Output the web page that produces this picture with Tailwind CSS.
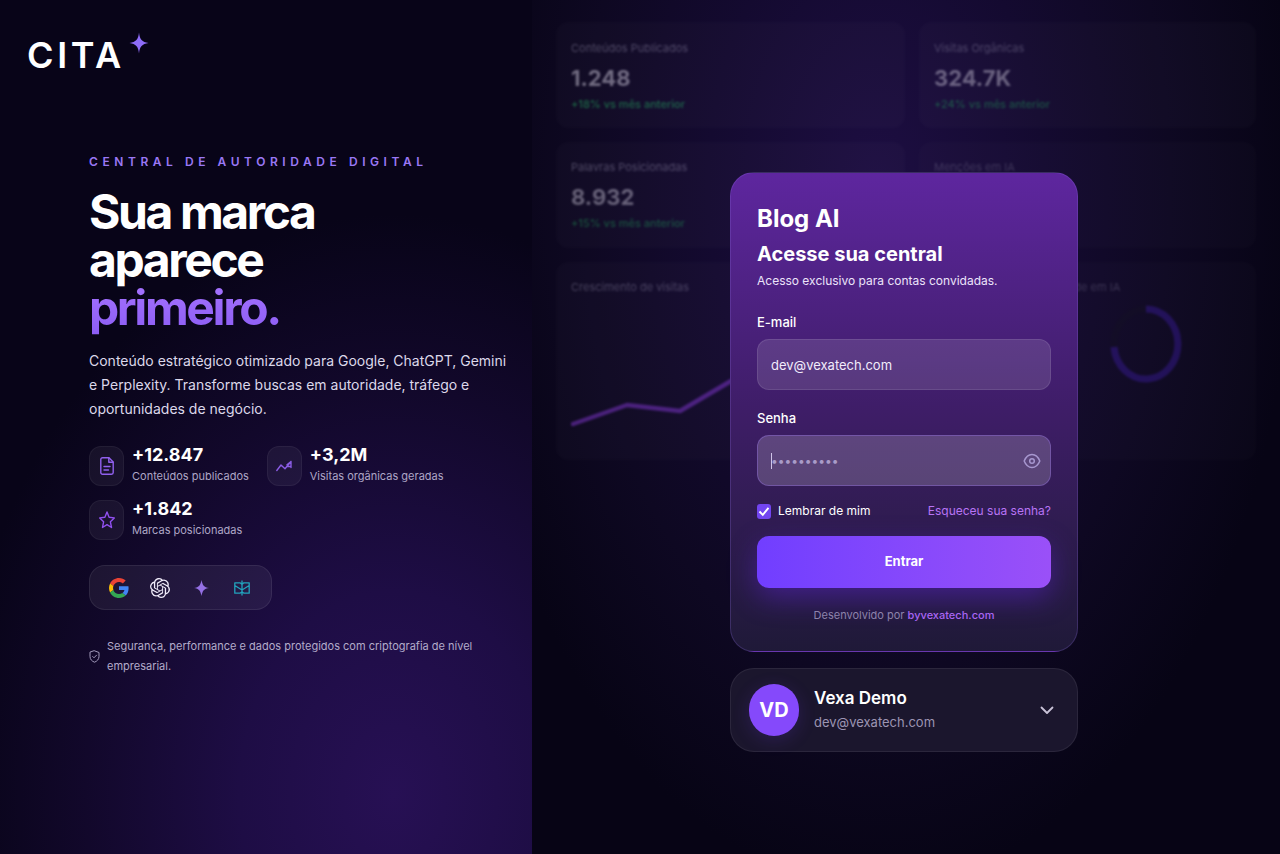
<!DOCTYPE html>
<html lang="pt-BR">
<head>
    <meta charset="UTF-8">
    <meta name="viewport" content="width=device-width, initial-scale=1.0">
    <title>CITA - Blog AI</title>
    <script src="https://cdn.jsdelivr.net/npm/@tailwindcss/browser@4"></script>
</head>
<body class="bg-[#060412] font-['Inter',sans-serif] text-white">
    <div class="grid min-h-screen grid-cols-[133fr_187fr]">

        <!-- Apresentação -->
        <section class="flex flex-col bg-[radial-gradient(ellipse_440px_580px_at_74%_93%,#271054_0%,#1e0d45_35%,#12082b_70%,#080418_100%)]">
            <header class="flex items-start pl-[27px] pt-[32px]">
                <span class="pt-[3px] text-4xl leading-10 font-semibold tracking-widest">CITA</span>
                <svg class="ml-1 h-[22px] w-[20px]" viewBox="0 0 20 22" fill="#8e6cf8" aria-hidden="true"><path d="M10 0.500C10.800 7.500 13 10 19.500 11C13 12 10.800 14.500 10 21.500C9.200 14.500 7 12 0.500 11C7 10 9.200 7.500 10 0.500Z"/></svg>
            </header>

            <div class="pl-[89px] pr-4 pt-[78px]">
                <p class="text-xs leading-[18px] font-semibold tracking-[0.38em] text-[#9a78f5]">CENTRAL DE AUTORIDADE DIGITAL</p>
                <h1 class="mt-[17px] text-5xl leading-[48px] font-bold tracking-tighter">
                    Sua marca<br>aparece<br>
                    <span class="bg-linear-to-b from-[#a874ff] to-[#8758f2] bg-clip-text pb-2 text-transparent">primeiro.</span>
                </h1>
                <p class="mt-[17px] max-w-[426px] text-sm leading-6 text-[#dcd8ea]">Conteúdo estratégico otimizado para Google, ChatGPT, Gemini e Perplexity. Transforme buscas em autoridade, tráfego e oportunidades de negócio.</p>

                <ul class="mt-6 flex flex-wrap gap-x-[18px] gap-y-3">
                    <li class="flex items-center gap-2">
                        <span class="flex h-10 w-[35px] items-center justify-center rounded-xl border border-white/5 bg-white/5">
                            <svg class="h-5 w-4" viewBox="0 0 16 20" fill="none" stroke="#9160ee" stroke-width="1.400" stroke-linecap="round" stroke-linejoin="round" aria-hidden="true"><path d="M10 1.800H3.500A1.700 1.700 0 0 0 1.800 3.500V16.500A1.700 1.700 0 0 0 3.500 18.200H12.500A1.700 1.700 0 0 0 14.200 16.500V6Z"/><path d="M9.800 2V6.300H14M5 10.500H11M5 14H9.500"/></svg>
                        </span>
                        <div>
                            <strong class="block text-lg leading-5 font-bold">+12.847</strong>
                            <span class="block text-[11px] leading-[22px] text-[#aea6c6]">Conteúdos publicados</span>
                        </div>
                    </li>
                    <li class="flex items-center gap-2">
                        <span class="flex h-10 w-[35px] items-center justify-center rounded-xl border border-white/5 bg-white/5">
                            <svg class="h-5 w-4" viewBox="0 0 16 20" fill="none" stroke="#8a5ce4" stroke-width="1.400" stroke-linecap="round" stroke-linejoin="round" aria-hidden="true"><path d="M0.800 14.500L5 9L9 12.800L15 5.500V11.500M11 8.800L15 5.500M11.500 10.500H15"/></svg>
                        </span>
                        <div>
                            <strong class="block text-lg leading-5 font-bold">+3,2M</strong>
                            <span class="block text-[11px] leading-[22px] text-[#aea6c6]">Visitas orgânicas geradas</span>
                        </div>
                    </li>
                    <li class="flex items-center gap-2">
                        <span class="flex h-10 w-[35px] items-center justify-center rounded-xl border border-white/5 bg-white/5">
                            <svg class="h-5 w-4" viewBox="0 0 16 20" fill="none" stroke="#9150f0" stroke-width="1.400" stroke-linejoin="round" aria-hidden="true"><path d="M8 2L10.100 7.300L15.300 7.900L11.400 11.800L12.500 17.500L8 14.700L3.500 17.500L4.600 11.800L0.700 7.900L5.900 7.300Z"/></svg>
                        </span>
                        <div>
                            <strong class="block text-lg leading-5 font-bold">+1.842</strong>
                            <span class="block text-[11px] leading-[22px] text-[#aea6c6]">Marcas posicionadas</span>
                        </div>
                    </li>
                </ul>

                <div class="mt-6 flex h-[45px] w-fit items-center gap-[21px] rounded-2xl border border-white/8 bg-white/6 px-[19px]">
                    <svg class="h-5 w-5" viewBox="0 0 48 48" role="img" aria-label="Google">
                        <path fill="#EA4335" d="M24 9.500c3.540 0 6.710 1.220 9.210 3.600l6.850-6.850C35.900 2.380 30.470 0 24 0 14.620 0 6.510 5.380 2.560 13.220l7.980 6.190C12.430 13.720 17.740 9.500 24 9.500z"/>
                        <path fill="#4285F4" d="M46.980 24.550c0-1.570-.15-3.090-.38-4.550H24v9.020h12.940c-.58 2.960-2.260 5.480-4.780 7.180l7.730 6c4.510-4.180 7.090-10.360 7.090-17.650z"/>
                        <path fill="#FBBC05" d="M10.530 28.590c-.48-1.450-.76-2.990-.76-4.590s.27-3.140.76-4.590l-7.980-6.190C.92 16.460 0 20.120 0 24c0 3.880.92 7.540 2.560 10.780l7.970-6.190z"/>
                        <path fill="#34A853" d="M24 48c6.480 0 11.930-2.130 15.890-5.810l-7.730-6c-2.150 1.450-4.920 2.300-8.160 2.300-6.260 0-11.570-4.220-13.470-9.910l-7.980 6.190C6.510 42.620 14.620 48 24 48z"/>
                    </svg>
                    <svg class="h-5 w-5" viewBox="0 0 24 24" fill="#f0ecfa" role="img" aria-label="ChatGPT"><path d="M22.2819 9.8211a5.9847 5.9847 0 0 0-.5157-4.9108 6.0462 6.0462 0 0 0-6.5098-2.9A6.0651 6.0651 0 0 0 4.9807 4.1818a5.9847 5.9847 0 0 0-3.9977 2.9 6.0462 6.0462 0 0 0 .7427 7.0966 5.98 5.98 0 0 0 .511 4.9107 6.051 6.051 0 0 0 6.5146 2.9001A5.9847 5.9847 0 0 0 13.2599 24a6.0557 6.0557 0 0 0 5.7718-4.2058 5.9894 5.9894 0 0 0 3.9977-2.9001 6.0557 6.0557 0 0 0-.7475-7.0729zm-9.022 12.6081a4.4755 4.4755 0 0 1-2.8764-1.0408l.1419-.0804 4.7783-2.7582a.7948.7948 0 0 0 .3927-.6813v-6.7369l2.02 1.1686a.071.071 0 0 1 .038.052v5.5826a4.504 4.504 0 0 1-4.4945 4.4944zm-9.6607-4.1254a4.4708 4.4708 0 0 1-.5346-3.0137l.142.0852 4.783 2.7582a.7712.7712 0 0 0 .7806 0l5.8428-3.3685v2.3324a.0804.0804 0 0 1-.0332.0615L9.74 19.9502a4.4992 4.4992 0 0 1-6.1408-1.6464zM2.3408 7.8956a4.485 4.485 0 0 1 2.3655-1.9728V11.6a.7664.7664 0 0 0 .3879.6765l5.8144 3.3543-2.0201 1.1685a.0757.0757 0 0 1-.071 0l-4.8303-2.7865A4.504 4.504 0 0 1 2.3408 7.872zm16.5963 3.8558L13.1038 8.364 15.1192 7.2a.0757.0757 0 0 1 .071 0l4.8303 2.7913a4.4944 4.4944 0 0 1-.6765 8.1042v-5.6772a.79.79 0 0 0-.407-.667zm2.0107-3.0231l-.142-.0852-4.7735-2.7818a.7759.7759 0 0 0-.7854 0L9.409 9.2297V6.8974a.0662.0662 0 0 1 .0284-.0615l4.8303-2.7866a4.4992 4.4992 0 0 1 6.6802 4.66zM8.3065 12.863l-2.02-1.1638a.0804.0804 0 0 1-.038-.0567V6.0742a4.4992 4.4992 0 0 1 7.3757-3.4537l-.142.0805L8.704 5.459a.7948.7948 0 0 0-.3927.6813zm1.0976-2.3654l2.602-1.4998 2.6069 1.4998v2.9994l-2.5974 1.4997-2.6067-1.4997Z"/></svg>
                    <svg class="h-5 w-5" viewBox="0 0 20 20" fill="#9470e4" role="img" aria-label="Gemini"><path d="M10.500 2C11.500 7.300 13 9.200 18 10C13 10.800 11.500 12.700 10.500 18C9.500 12.700 8 10.800 3 10C8 9.200 9.500 7.300 10.500 2Z"/></svg>
                    <svg class="h-5 w-5" viewBox="0 0 20 20" fill="none" stroke="#22a3bd" stroke-width="1.300" stroke-linejoin="round" role="img" aria-label="Perplexity"><path d="M10 2.500V17.500M8.200 4.800H2.800V15.200H8L10 13.800L12 15.200H17.200V4.800H11.800L10 6.500L8.200 4.800M2.800 7.500L10 12L17.200 7.500"/></svg>
                </div>

                <p class="mt-[26px] flex max-w-[420px] items-center gap-[7px] text-[11px] leading-5 text-[#b3abca]">
                    <svg class="h-[13px] w-[11px] shrink-0" viewBox="0 0 11 13" fill="none" stroke="#a29abb" stroke-linecap="round" stroke-linejoin="round" aria-hidden="true"><path d="M5.500 0.800L10 2.500V6.500C10 9.300 8 11.300 5.500 12.200C3 11.300 1 9.300 1 6.500V2.500ZM3.700 6.500L5 7.800L7.500 5.200"/></svg>
                    <span>Segurança, performance e dados protegidos com criptografia de nível empresarial.</span>
                </p>
            </div>
        </section>

        <!-- Acesso -->
        <main class="relative flex flex-col items-center overflow-hidden bg-[radial-gradient(ellipse_420px_700px_at_46%_22%,#1d0e42_0%,#140a30_40%,#0e0822_70%,#070415_100%)] pr-1 pt-[172px]">

            <!-- Painel desfocado ao fundo -->
            <div class="absolute inset-x-6 top-[22px] grid grid-cols-[349fr_337fr] gap-[14px] opacity-45 blur-[1px]" aria-hidden="true">
                <div class="h-[106px] rounded-xl bg-white/4 px-[15px] pt-4">
                    <p class="text-[11px] leading-5 text-[#9d96b4]">Conteúdos Publicados</p>
                    <p class="mt-1 text-[22px] leading-8 font-bold text-[#e5e0f0]">1.248</p>
                    <p class="text-[11px] leading-5 font-medium text-[#2fd872]">+18% vs mês anterior</p>
                </div>
                <div class="h-[106px] rounded-xl bg-white/4 px-[15px] pt-4">
                    <p class="text-[11px] leading-5 text-[#8f88a6]">Visitas Orgânicas</p>
                    <p class="mt-1 text-[22px] leading-8 font-bold text-[#d0cbdc]">324.7K</p>
                    <p class="text-[11px] leading-5 font-medium text-[#27a85e]">+24% vs mês anterior</p>
                </div>
                <div class="h-[106px] rounded-xl bg-white/4 px-[15px] pt-[15px]">
                    <p class="text-[11px] leading-5 text-[#9d96b4]">Palavras Posicionadas</p>
                    <p class="mt-1 text-[22px] leading-8 font-bold text-[#d0cbdc]">8.932</p>
                    <p class="text-[11px] leading-5 font-medium text-[#27a85e]">+15% vs mês anterior</p>
                </div>
                <div class="h-[106px] rounded-xl bg-white/3 px-[15px] pt-[15px]">
                    <p class="text-[11px] leading-5 text-[#6f6888]">Menções em IA</p>
                </div>
                <div class="h-[198px] rounded-xl bg-white/4 px-[15px] pt-[15px]">
                    <p class="text-[11px] leading-5 text-[#8f88a6]">Crescimento de visitas</p>
                    <svg class="mt-[55px] h-[80px] w-[318px]" viewBox="0 0 318 80" fill="none" stroke="#9340e8" stroke-width="4.500" stroke-linecap="round" stroke-linejoin="round"><path d="M2 72L56 53L109 59L160 29L213 36L265 14L316 4"/></svg>
                </div>
                <div class="h-[198px] rounded-xl bg-white/3 px-[15px] pt-[15px]">
                    <p class="pl-[94px] text-[11px] leading-5 text-[#6f6888]">Visibilidade em IA</p>
                    <svg class="ml-[176px] mt-[8px] h-[78px] w-[72px]" viewBox="0 0 72 78" fill="none" stroke-width="7"><ellipse cx="36" cy="39" rx="32" ry="35" stroke="#181428"/><path d="M36 4A32 35 0 1 1 4 42" stroke="#3d1f9e"/></svg>
                </div>
            </div>

            <form class="relative w-[348px] rounded-3xl border border-[#8a6be0]/25 bg-linear-to-b from-[#5e269f] via-[#3e1d67] to-[#1f1938] px-[26px] pb-[26px] pt-[31px]">
                <h2 class="text-2xl leading-[30px] font-bold">Blog AI</h2>
                <h3 class="mt-[6px] text-xl leading-[28px] font-bold">Acesse sua central</h3>
                <p class="mt-[2px] text-xs leading-[22px] text-[#ece4fa]">Acesso exclusivo para contas convidadas.</p>

                <label for="email" class="mt-[20px] block text-[13px] leading-5 font-medium">E-mail</label>
                <input id="email" type="email" value="dev@vexatech.com" class="mt-[7px] block h-[51px] w-full rounded-xl border border-white/10 bg-white/12 px-[13px] text-[13px] text-[#f1ebfb] outline-none">

                <label for="senha" class="mt-[18px] block text-[13px] leading-5 font-medium">Senha</label>
                <div class="relative mt-[7px]">
                    <input id="senha" type="password" placeholder="••••••••••" class="block h-[51px] w-full rounded-xl border border-[#8a68cf]/50 bg-white/18 px-[13px] text-xs outline-none placeholder:text-[#a99cc8]">
                    <span class="absolute left-[14px] top-[18px] h-4 w-px bg-[#cfc4e8]"></span>
                    <button type="button" aria-label="Mostrar senha" class="absolute right-[10px] top-[16px] h-5 w-[18px]">
                        <svg class="h-5 w-[18px]" viewBox="0 0 18 20" fill="none" stroke="#a797cf" stroke-width="1.500" stroke-linejoin="round"><path d="M1.200 10C3 5.500 5.800 3.500 9 3.500S15 5.500 16.800 10C15 14.500 12.200 16.500 9 16.500S3 14.500 1.200 10Z"/><circle cx="9" cy="10" r="2.300"/></svg>
                    </button>
                </div>

                <div class="mt-[15px] flex items-center justify-between text-xs leading-5">
                    <div class="flex items-center gap-[7px]">
                        <div class="relative h-[15px] w-[14px]">
                            <input id="lembrar" type="checkbox" checked class="block h-[15px] w-[14px] appearance-none rounded-[3px] bg-[#7245f0]">
                            <svg class="pointer-events-none absolute inset-0 h-[15px] w-[14px]" viewBox="0 0 14 15" fill="none" stroke="#fff" stroke-width="1.900"><path d="M2.500 7.500L5.800 10.800L11.500 3.800"/></svg>
                        </div>
                        <label for="lembrar">Lembrar de mim</label>
                    </div>
                    <a href="#" class="text-[#b874f5]">Esqueceu sua senha?</a>
                </div>

                <button type="submit" class="mt-[15px] block h-[52px] w-full rounded-xl bg-linear-to-r from-[#713eff] to-[#9a50f8] text-[13px] font-bold shadow-[0_10px_28px_rgba(98,38,220,0.450)]">Entrar</button>
                <p class="mt-[17px] text-center text-[11px] leading-5 text-[#8d82ab]">Desenvolvido por <a href="#" class="font-medium text-[#a965f3]">byvexatech.com</a></p>
            </form>

            <button type="button" class="relative mt-4 flex h-[84px] w-[348px] items-center rounded-3xl border border-white/7 bg-[#1b162d] px-[18px] text-left">
                <span class="flex h-[52px] w-[50px] items-center justify-center rounded-full bg-[#8549fb] text-xl font-bold shadow-[0_4px_18px_rgba(110,60,230,0.200)]">VD</span>
                <span class="ml-[15px] flex-1">
                    <span class="block text-[17px] leading-6 font-semibold">Vexa Demo</span>
                    <span class="block text-[13px] leading-6 text-[#9c94b2]">dev@vexatech.com</span>
                </span>
                <svg class="mr-[5px] h-4 w-[14px]" viewBox="0 0 14 16" fill="none" stroke="#c9c3d8" stroke-width="1.800" stroke-linecap="round" stroke-linejoin="round" aria-hidden="true"><path d="M1.500 5.500L7 11L12.500 5.500"/></svg>
            </button>
        </main>
    </div>
</body>
</html>
